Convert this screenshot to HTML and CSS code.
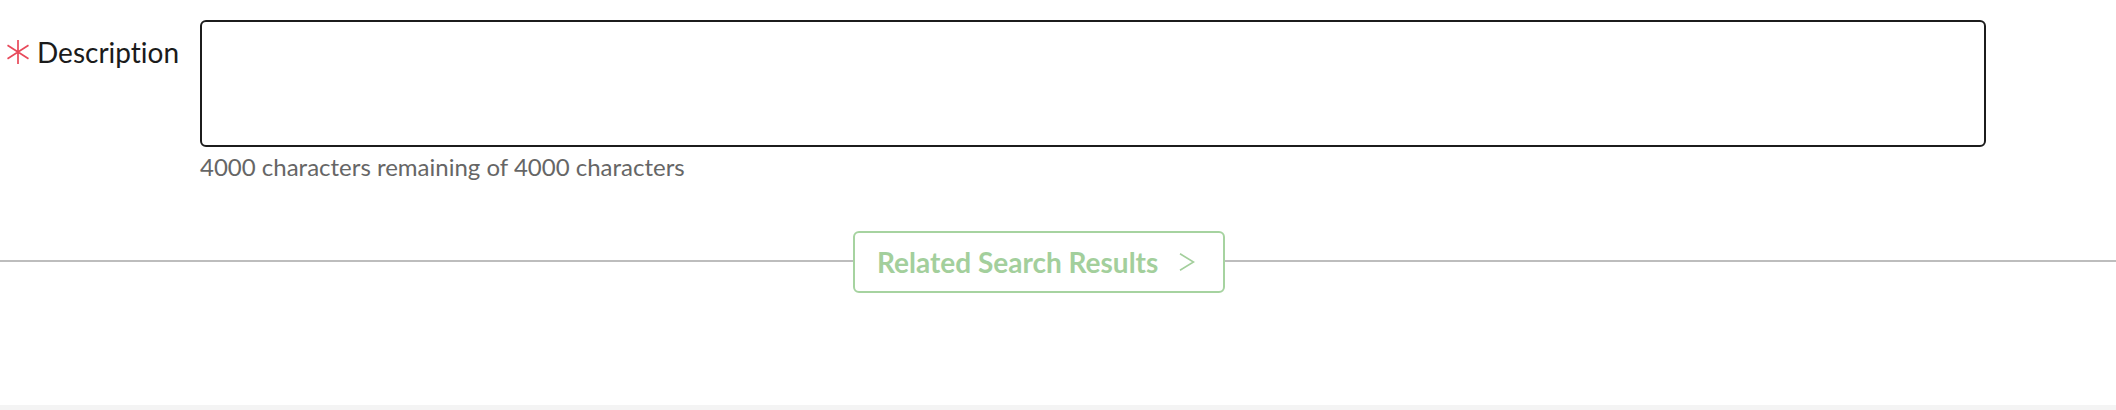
FILE: index.html
```html
<!DOCTYPE html>
<html lang="en">
<head>
<meta charset="utf-8">
<title>Description</title>
<link rel="stylesheet" href="styles.css">
</head>
<body>
<div class="page">
  <div class="field">
    <label class="field-label" for="desc">
      <svg class="req" viewBox="0 0 22 24" width="22" height="24" aria-hidden="true">
        <path d="M11 0V24M0.5 5.3L21.5 18.7M0.5 18.7L21.5 5.3" fill="none" stroke="#e8495a" stroke-width="1.7" stroke-linecap="butt"/>
      </svg>
      <span>Description</span>
    </label>
    <div class="field-control">
      <textarea id="desc" class="textarea"></textarea>
      <div class="counter">4000 characters remaining of 4000 characters</div>
    </div>
  </div>
  <div class="divider-row">
    <button class="related-btn" type="button">
      <span>Related Search Results</span>
      <svg class="chev" viewBox="0 0 16 18" width="16" height="18" aria-hidden="true">
        <path d="M1 0.7L14.5 9L1 17.3" fill="none" stroke="#a3cf9c" stroke-width="1.6"/>
      </svg>
    </button>
  </div>
  <div class="spacer"></div>
  <div class="footer-strip"></div>
</div>
</body>
</html>
```

FILE: styles.css
```css
html, body {
  margin: 0;
  padding: 0;
  background: #ffffff;
}
body {
  font-family: Lato, "Liberation Sans", sans-serif;
  font-variant-ligatures: none;
  width: 2116px;
  height: 410px;
  overflow: hidden;
}
.page {
  display: flex;
  flex-direction: column;
  height: 410px;
}
.field {
  display: flex;
  align-items: flex-start;
  padding-top: 20px;
}
.field-label {
  width: 200px;
  box-sizing: border-box;
  padding-left: 7px;
  padding-top: 15px;
  display: flex;
  align-items: center;
  gap: 8px;
  font-size: 28px;
  color: #1b1b1b;
}
.req {
  flex: none;
  display: block;
}
.field-control {
  width: 1786px;
  display: flex;
  flex-direction: column;
}
.textarea {
  display: block;
  box-sizing: border-box;
  width: 1786px;
  height: 127px;
  margin: 0;
  border: 2px solid #1c1c1c;
  border-radius: 6px;
  background: #fff;
  resize: none;
  font-family: inherit;
  font-size: 20px;
}
.counter {
  margin-top: 5px;
  font-size: 24px;
  line-height: 29px;
  color: #666666;
}
.divider-row {
  margin-top: 50px;
  display: flex;
  justify-content: center;
  padding-right: 38px;
  background: linear-gradient(#bdbdbd, #bdbdbd) no-repeat 0 29px / 100% 2px;
}
.related-btn {
  box-sizing: border-box;
  width: 372px;
  height: 62px;
  display: flex;
  align-items: center;
  justify-content: space-between;
  padding: 0 28px 0 22px;
  background: #fff;
  border: 2px solid #a6d3a0;
  border-radius: 6px;
  font-family: Lato, "Liberation Sans", sans-serif;
  font-variant-ligatures: none;
  font-weight: 700;
  font-size: 28px;
  color: #a3cf9c;
  cursor: pointer;
}
.chev {
  display: block;
}
.spacer {
  flex: 1;
}
.footer-strip {
  height: 5px;
  background: #f4f4f4;
}
```
